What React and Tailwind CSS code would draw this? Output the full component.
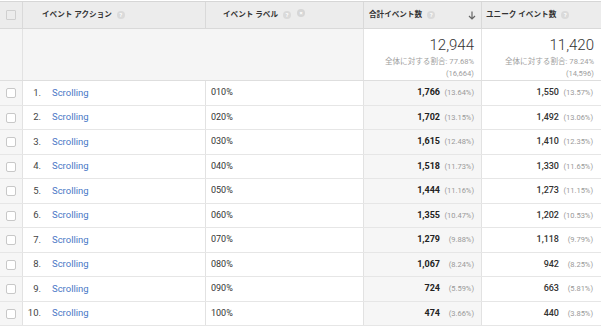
const rows = [
  { n: 1, label: '010%', total: '1,766', totalPct: '13.64%', unique: '1,550', uniquePct: '13.57%' },
  { n: 2, label: '020%', total: '1,702', totalPct: '13.15%', unique: '1,492', uniquePct: '13.06%' },
  { n: 3, label: '030%', total: '1,615', totalPct: '12.48%', unique: '1,410', uniquePct: '12.35%' },
  { n: 4, label: '040%', total: '1,518', totalPct: '11.73%', unique: '1,330', uniquePct: '11.65%' },
  { n: 5, label: '050%', total: '1,444', totalPct: '11.16%', unique: '1,273', uniquePct: '11.15%' },
  { n: 6, label: '060%', total: '1,355', totalPct: '10.47%', unique: '1,202', uniquePct: '10.53%' },
  { n: 7, label: '070%', total: '1,279', totalPct: '9.88%', unique: '1,118', uniquePct: '9.79%' },
  { n: 8, label: '080%', total: '1,067', totalPct: '8.24%', unique: '942', uniquePct: '8.25%' },
  { n: 9, label: '090%', total: '724', totalPct: '5.59%', unique: '663', uniquePct: '5.81%' },
  { n: 10, label: '100%', total: '474', totalPct: '3.66%', unique: '440', uniquePct: '3.85%' }
];

const heights = ['h-[25px]', 'h-[24px]'];

const font = "font-['Roboto','Noto_Sans_CJK_JP',sans-serif]";

function Help() {
  return (
    <span className="ml-[5px] inline-flex h-[8px] w-[8px] items-center justify-center rounded-full bg-[#dadada] text-[6px] font-bold leading-none text-white">
      ?
    </span>
  );
}

function Checkbox() {
  return <div className="h-[10px] w-[10px] rounded-[2px] border border-[#c8c8c8] bg-white" />;
}

function Summary({ value, pct, base }) {
  return (
    <div className="flex flex-col items-end pt-[7px] pr-[7px]">
      <span className="text-[15px] font-light leading-[18px] text-[#333]">{value}</span>
      <span className="mt-[1px] text-[7.6px] leading-[13px] text-[#a0a0a0]">全体に対する割合: {pct}</span>
      <span className="text-[7.6px] leading-[12px] text-[#a0a0a0]">({base})</span>
    </div>
  );
}

export default function App() {
  return (
    <div className={`h-[329px] w-[601px] bg-white ${font}`}>
      <div className="mt-px border-t border-[#d6d6d6]">
        {/* header */}
        <div className="grid h-[27px] grid-cols-[22px_183px_158px_118px_120px] border-b border-[#d9d9d9] bg-[#ececec] text-[7.6px] font-bold text-[#333]">
          <div className="flex items-center justify-center">
            <div className="h-[10px] w-[10px] rounded-[1px] border border-[#cfcfcf] bg-[#ececec]" />
          </div>
          <div className="flex items-center border-l border-[#d9d9d9] pl-[19px]">
            イベント アクション
            <Help />
          </div>
          <div className="flex items-center border-l border-[#d9d9d9] pl-[17px]">
            イベント ラベル
            <Help />
            <span className="ml-[6px] -mt-[5px] inline-flex h-[8px] w-[8px] items-center justify-center rounded-full bg-[#d6d6d6] text-[6px] leading-none text-white">
              ×
            </span>
          </div>
          <div className="flex items-center border-l border-[#d9d9d9] pl-[5px] pr-[5px]">
            合計イベント数
            <Help />
            <svg className="ml-auto" width="8" height="9" viewBox="0 0 8 9" fill="none" stroke="#666" strokeWidth="1.2">
              <path d="M4 0.5V8M1 5l3 3 3-3" />
            </svg>
          </div>
          <div className="flex items-center border-l border-[#d9d9d9] pl-[4px]">
            ユニーク イベント数
            <Help />
          </div>
        </div>

        {/* summary */}
        <div className="grid h-[52px] grid-cols-[22px_183px_158px_118px_120px] border-b border-[#dedede]">
          <div className="bg-[#f5f5f5]" />
          <div className="border-l border-[#e2e2e2] bg-[#f5f5f5]" />
          <div className="bg-[#f5f5f5]" />
          <div className="border-l border-[#e2e2e2] bg-white">
            <Summary value="12,944" pct="77.68%" base="16,664" />
          </div>
          <div className="border-l border-[#e2e2e2] bg-white">
            <Summary value="11,420" pct="78.24%" base="14,596" />
          </div>
        </div>

        {/* rows */}
        {rows.map((row, i) => (
          <div
            key={row.n}
            className={`grid grid-cols-[22px_183px_158px_118px_120px] border-b border-[#e6e6e6] ${heights[i % 2]}`}
          >
            <div className="flex items-center justify-center bg-[#f6f6f6]">
              <Checkbox />
            </div>
            <div className="flex items-center border-l border-[#e2e2e2] text-[9.5px]">
              <span className="w-[18px] text-right text-[#444]">{row.n}.</span>
              <span className="ml-[11px] text-[#4a78c6]">Scrolling</span>
            </div>
            <div className="flex items-center border-l border-[#e2e2e2] pl-[5px] text-[9px] text-[#333]">
              {row.label}
            </div>
            <div className="flex items-center justify-end border-l border-[#e2e2e2] bg-[#f6f6f6] pr-[7px]">
              <span className="text-[9px] font-bold text-[#222]">{row.total}</span>
              <span className="ml-[4px] w-[30px] text-right text-[7.5px] text-[#999]">({row.totalPct})</span>
            </div>
            <div className="flex items-center justify-end border-l border-[#e2e2e2] pr-[8px]">
              <span className="text-[9px] font-medium text-[#333]">{row.unique}</span>
              <span className="ml-[4px] w-[30px] text-right text-[7.5px] text-[#999]">({row.uniquePct})</span>
            </div>
          </div>
        ))}
      </div>
    </div>
  );
}
